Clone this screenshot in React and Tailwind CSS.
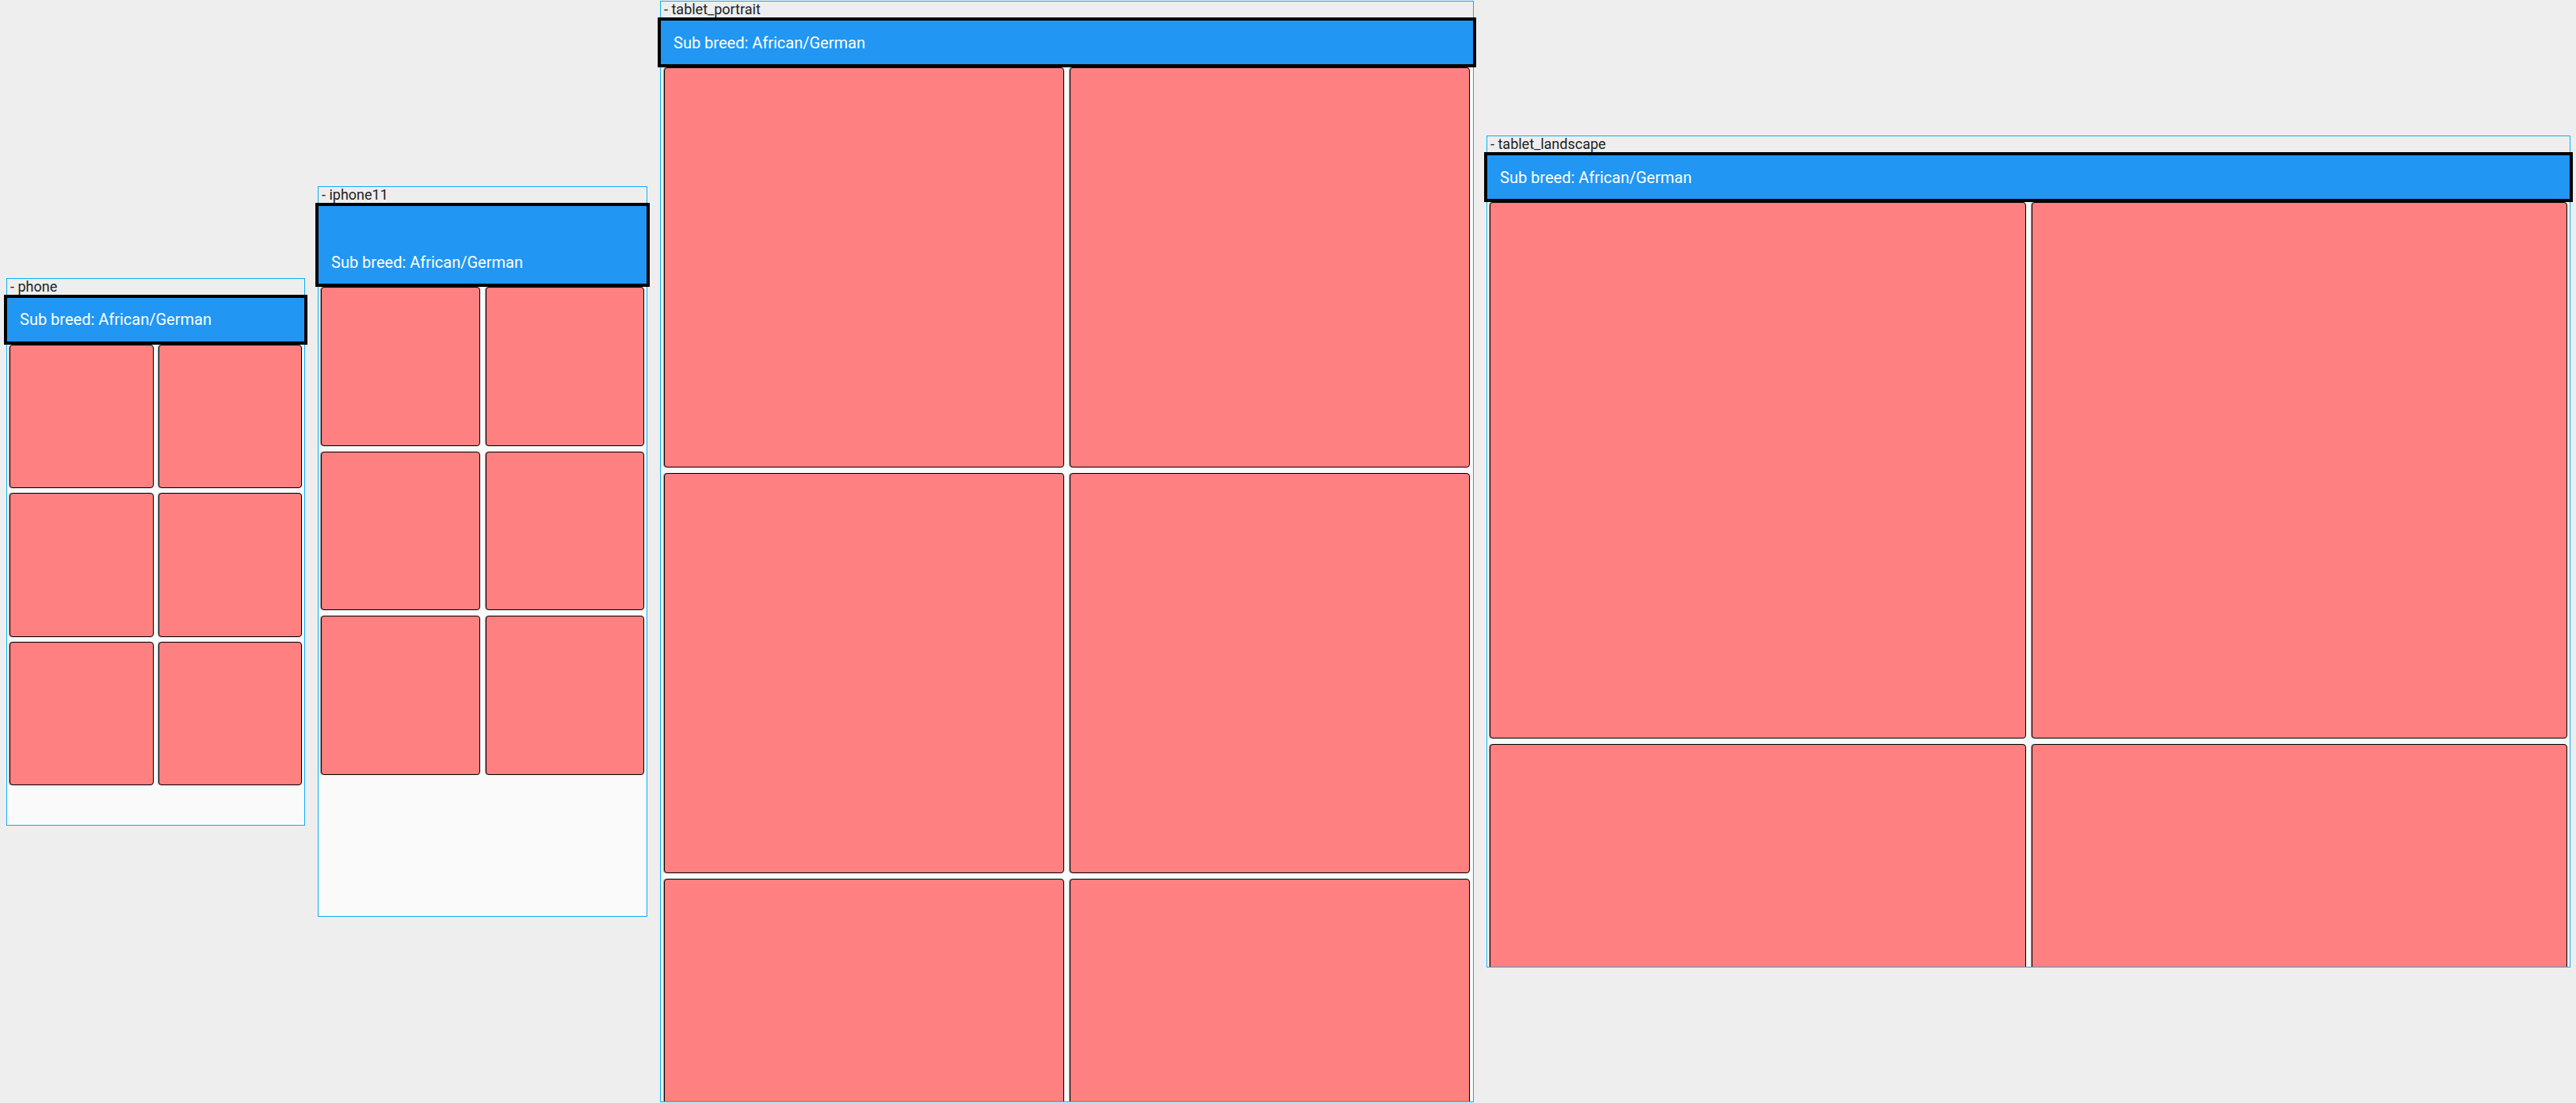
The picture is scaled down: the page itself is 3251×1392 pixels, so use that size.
import React from 'react';

const devices = [
    { name: 'phone', frame: 'w-[377px] h-[691px]', header: 'h-[63px]', grid: 'px-[3px] gap-[6px]' },
    { name: 'iphone11', frame: 'w-[416px] h-[922px]', header: 'h-[106px] pt-[43px]', grid: 'px-[3px] gap-[7px]' },
    { name: 'tablet_portrait', frame: 'w-[1027px] h-[1390px]', header: 'h-[63px]', grid: 'px-[4px] gap-[7px]' },
    { name: 'tablet_landscape', frame: 'w-[1368px] h-[1050px]', header: 'h-[63px]', grid: 'px-[3px] gap-[7px]' },
];

const Tile = () => (
    <div className="aspect-square bg-[#ff8080] border border-black rounded-[4px] shadow-[-1px_0_1px_rgba(0,0,0,0.35)]" />
);

const DeviceFrame = ({ device }) => (
    <div className={`${device.frame} shrink-0 flex flex-col border border-[#0eaef5] bg-[#fafafa]`}>
        <div className="h-[20px] shrink-0 bg-[#eeeeee] pl-1 text-[18px] leading-[20px] text-[#222222]">- {device.name}</div>
        <div className={`${device.header} shrink-0 -mx-[4px] border-4 border-black bg-[#2196f3]`}>
            <div className="h-full flex items-center pl-4 text-[20px] text-white">Sub breed: African/German</div>
        </div>
        <div className="flex-1 min-h-0 overflow-hidden">
            <div className={`grid grid-cols-2 ${device.grid}`}>
                {[0, 1, 2, 3, 4, 5].map((i) => <Tile key={i} />)}
            </div>
        </div>
    </div>
);

export default function App() {
    return (
        <div className="w-[3251px] h-[1392px] overflow-hidden bg-[#eeeeee] flex items-center gap-4 pl-[8px] font-['Roboto',sans-serif]">
            {devices.map((d) => <DeviceFrame key={d.name} device={d} />)}
        </div>
    );
}
